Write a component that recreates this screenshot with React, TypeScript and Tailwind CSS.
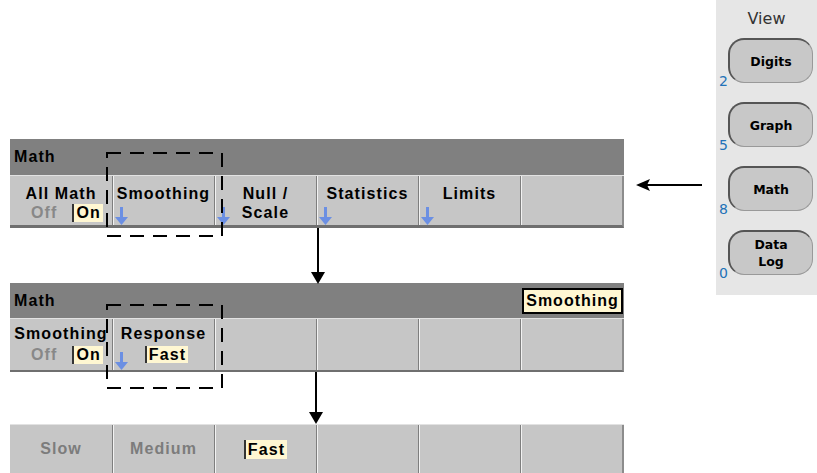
import React from "react";

const keyFont = "font-['Liberation_Sans',Arial,sans-serif] font-bold text-[16px] tracking-[1.1px]";

function BlueArrow() {
  return (
    <svg width="13" height="18" viewBox="0 0 13 18" className="absolute bottom-0 left-[2px]">
      <rect x="5" y="0" width="3" height="12" fill="#6b8fe3" />
      <polygon points="0,10 13,10 6.5,18" fill="#6b8fe3" />
    </svg>
  );
}

function Picked({ children, className = "" }: { children: React.ReactNode; className?: string }) {
  return (
    <span className={`bg-[#fff7d2] border-l-2 border-[#333] px-[2px] text-black ${className}`}>
      {children}
    </span>
  );
}

type Key = {
  top?: string;
  bottom?: React.ReactNode;
  arrow?: boolean;
};

function Softkey({ k, first }: { k: Key; first: boolean }) {
  return (
    <div
      className={`relative flex flex-col items-center pt-[9px] leading-[18px] ${keyFont} text-black ${
        first ? "" : "border-l border-[#7e7e7e] shadow-[inset_1px_0_0_#f2f2f2]"
      }`}
    >
      {k.top && <div className="whitespace-nowrap">{k.top}</div>}
      {k.bottom && <div className="whitespace-nowrap mt-[1px]">{k.bottom}</div>}
      {k.arrow && <BlueArrow />}
    </div>
  );
}

function OffOn() {
  return (
    <span className="flex items-center gap-[15px] pl-[12px]">
      <span className="text-[#888]">Off</span>
      <Picked>On</Picked>
    </span>
  );
}

function DownArrow({ height, left }: { height: number; left: number }) {
  return (
    <div className="relative" style={{ height }}>
      <svg width="14" height={height} className="absolute top-0" style={{ left: left - 7 }}>
        <rect x="6" y="0" width="2" height={height - 10} fill="#000" />
        <polygon points={`0,${height - 12} 14,${height - 12} 7,${height}`} fill="#000" />
      </svg>
    </div>
  );
}

function Dashed({ className }: { className: string }) {
  return (
    <svg className={`absolute ${className}`} width="117" height="85" viewBox="0 0 117 85">
      <rect
        x="1"
        y="1"
        width="115"
        height="83"
        fill="none"
        stroke="#000"
        strokeWidth="2"
        strokeDasharray="14 9"
      />
    </svg>
  );
}

function ViewButton({ label, num }: { label: React.ReactNode; num: string }) {
  return (
    <div>
      <div className="pl-[12px] pr-[4px]">
        <div className="h-[45px] rounded-[16px] border-t-2 border-l-2 border-r border-b border-t-[#555] border-l-[#555] border-r-[#999] border-b-[#999] bg-[#c8c8c8] flex items-center justify-center text-center font-['DejaVu_Sans',sans-serif] font-bold text-[12.5px] leading-[17px] text-black">
          {label}
        </div>
      </div>
      <div className="-mt-[10px] h-[16px] pl-[3px] text-[14px] leading-[16px] text-[#2272b8] font-['DejaVu_Sans',sans-serif]">
        {num}
      </div>
    </div>
  );
}

export default function App() {
  const row1: Key[] = [
    { top: "All Math", bottom: <OffOn /> },
    { top: "Smoothing", arrow: true },
    { top: "Null /", bottom: "Scale", arrow: true },
    { top: "Statistics", arrow: true },
    { top: "Limits", arrow: true },
    {},
  ];

  return (
    <div className="relative flex w-[817px] h-[473px] overflow-hidden bg-white">
      <div className="w-[716px] flex flex-col pl-[10px]">
        {/* Math menu */}
        <div className="mt-[139px] w-[614px]">
          <div className={`h-[36px] bg-[#808080] flex items-center pl-[4px] ${keyFont} text-black tracking-[0.8px]`}>
            Math
          </div>
          <div className="h-px bg-[#e2e2e2]" />
          <div className="grid grid-cols-6 h-[52px] bg-[#c6c6c6] border-b-[3px] border-r-2 border-b-[#6f6f6f] border-r-[#8c8c8c]">
            {row1.map((k, i) => (
              <Softkey key={i} k={k} first={i === 0} />
            ))}
          </div>
        </div>

        <DownArrow height={56} left={308} />

        {/* Smoothing menu */}
        <div className="w-[614px]">
          <div className={`h-[35px] bg-[#808080] flex items-center justify-between pl-[4px] pr-[1px] ${keyFont} text-black tracking-[0.8px]`}>
            <span>Math</span>
            <span className="h-[26px] w-[101px] flex items-center justify-center border-2 border-black bg-[#fff7d2] tracking-[1px]">
              Smoothing
            </span>
          </div>
          <div className="h-px bg-[#e2e2e2]" />
          <div className="grid grid-cols-6 h-[53px] bg-[#c6c6c6] border-b-2 border-r-2 border-b-[#6f6f6f] border-r-[#8c8c8c]">
            <div className={`flex flex-col items-center pt-[6px] leading-[18px] ${keyFont} text-black`}>
              <div className="whitespace-nowrap">Smoothing</div>
              <div className="mt-[3px]"><OffOn /></div>
            </div>
            <div
              className={`relative flex flex-col items-center pt-[6px] leading-[18px] ${keyFont} text-black border-l border-[#7e7e7e] shadow-[inset_1px_0_0_#f2f2f2]`}
            >
              <div className="whitespace-nowrap">Response</div>
              <div className="mt-[3px] pl-[6px]">
                <Picked>Fast</Picked>
              </div>
              <BlueArrow />
            </div>
            {[0, 1, 2, 3].map((i) => (
              <div key={i} className="border-l border-[#7e7e7e] shadow-[inset_1px_0_0_#f2f2f2]" />
            ))}
          </div>
        </div>

        <DownArrow height={52} left={306} />

        {/* Response choices */}
        <div className="w-[614px]">
          <div className="h-px bg-[#e2e2e2]" />
          <div className={`grid grid-cols-6 h-[48px] bg-[#c6c6c6] border-r-2 border-r-[#8c8c8c] ${keyFont}`}>
            <div className="flex items-center justify-center text-[#7c7c7c]">Slow</div>
            <div className="flex items-center justify-center text-[#7c7c7c] border-l border-[#7e7e7e] shadow-[inset_1px_0_0_#f2f2f2]">
              Medium
            </div>
            <div className="flex items-center justify-center border-l border-[#7e7e7e] shadow-[inset_1px_0_0_#f2f2f2]">
              <Picked className="leading-[19px]">Fast</Picked>
            </div>
            {[0, 1, 2].map((i) => (
              <div key={i} className="border-l border-[#7e7e7e] shadow-[inset_1px_0_0_#f2f2f2]" />
            ))}
          </div>
        </div>
      </div>

      {/* Front panel View keys */}
      <div className="w-[101px] h-[295px] bg-[#e6e6e6] flex flex-col">
        <div className="mt-[9px] h-[20px] text-center text-[16px] leading-[20px] text-[#333] font-['DejaVu_Sans',sans-serif]">
          View
        </div>
        <div className="mt-[9px] flex flex-col gap-[13px]">
          <ViewButton label="Digits" num="2" />
          <ViewButton label="Graph" num="5" />
          <ViewButton label="Math" num="8" />
          <ViewButton label={<>Data<br />Log</>} num="0" />
        </div>
      </div>

      {/* connector from Math key to the menu */}
      <svg className="absolute left-[636px] top-[179px]" width="66" height="12">
        <rect x="8" y="5" width="58" height="2" fill="#000" />
        <polygon points="0,6 14,0 11,6 14,12" fill="#000" />
      </svg>

      <Dashed className="left-[106px] top-[152px]" />
      <Dashed className="left-[106px] top-[304px]" />
    </div>
  );
}
